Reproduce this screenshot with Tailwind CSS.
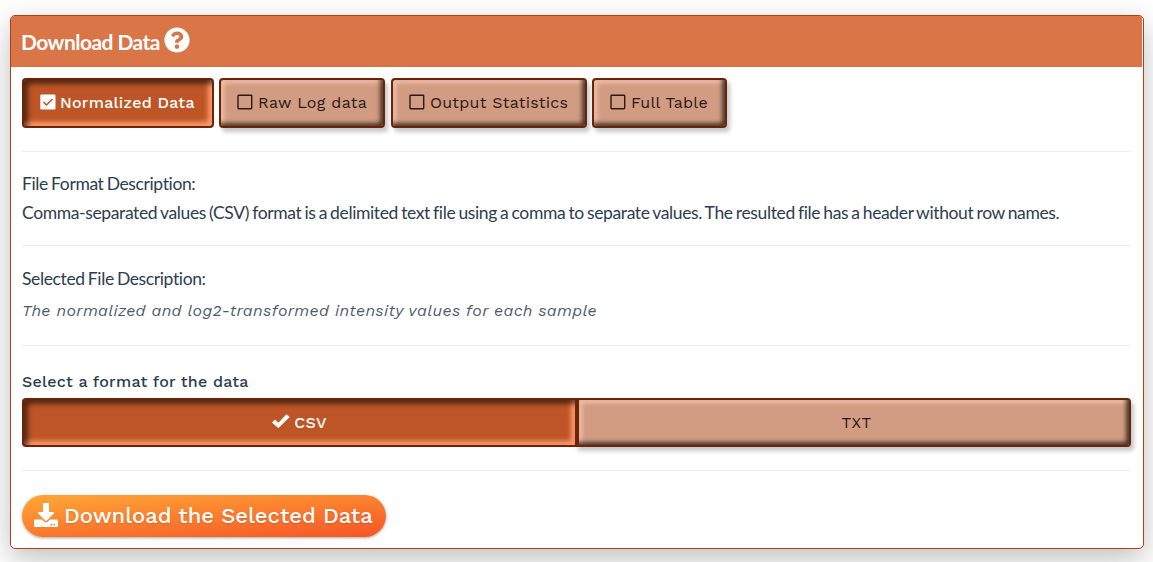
<!DOCTYPE html>
<html lang="en">
<head>
<meta charset="utf-8">
<title>Download Data</title>
<script src="https://cdn.jsdelivr.net/npm/@tailwindcss/browser@4"></script>
</head>
<body class="bg-white h-[562px] overflow-hidden pl-[10px] pt-[15px] font-['Work_Sans','Inter',sans-serif] text-[#2c3e50]">
<main class="w-[1134px] h-[534px] rounded-[5px] border border-[#b0410e] bg-white shadow-[0_10px_30px_rgba(0,0,0,0.25)]">
  <header class="h-[51px] w-[1131px] rounded-tl-[4px] bg-[#d97547] pl-[10px] flex items-center text-white">
    <h1 class="font-['Lato',sans-serif] font-bold text-[21px] leading-[26px] tracking-[-0.55px] w-[142px] whitespace-nowrap">Download Data</h1>
    <svg class="size-[26px] mb-[3px] ml-[1px]" viewBox="0 0 512 512" fill="currentColor"><path d="M504 256c0 137-111 248-248 248S8 393 8 256 119 8 256 8s248 111 248 248zM262.700 90c-54.500 0-89.300 23-116.500 63.800-3.500 5.300-2.400 12.400 2.700 16.300l34.700 26.300c5.200 3.900 12.600 3 16.700-2.100 17.900-22.700 30.100-35.800 57.300-35.800 20.400 0 45.700 13.100 45.700 33 0 15-12.400 22.700-32.500 34C247.100 238.500 216 254.900 216 296v4c0 6.600 5.400 12 12 12h56c6.600 0 12-5.400 12-12v-1.300c0-28.500 83.200-29.600 83.200-106.700 0-58-60.200-102-116.500-102zM256 338c-25.400 0-46 20.600-46 46s20.600 46 46 46 46-20.600 46-46-20.600-46-46-46z"/></svg>
  </header>
  <section class="px-[11px] pt-[11px] w-[1132px]">
    <div class="flex h-[50px] text-[16px] text-[#2a1a14]">
      <button class="w-[192px] mr-[5px] rounded-[4px] border-2 border-[#6b2408] bg-[#bd5526] text-white flex items-center pl-[16px] whitespace-nowrap shadow-[inset_4px_4px_5px_rgba(0,0,0,0.55),inset_-4px_-4px_5px_#ff9a6e]">
        <svg class="size-[16px] mr-[4px] mb-[2px] shrink-0" viewBox="0 0 16 16"><rect x=".3" y=".5" width="15.200" height="15" rx="1.300" fill="#fff"/><path d="M3.500 8l3 3 6-6" fill="none" stroke="#bd5526" stroke-width="1.500"/></svg>
        <span class="font-medium tracking-[0.28px]">Normalized Data</span>
      </button>
      <button class="w-[166px] mr-[6px] rounded-[4px] border-2 border-[#6b2408] bg-[#d29c82] flex items-center pl-[16px] whitespace-nowrap shadow-[3px_4px_4px_rgba(0,0,0,0.22),inset_-3px_-3px_4px_rgba(0,0,0,0.65),inset_3px_3px_4px_#f0bfaa]">
        <svg class="size-[16px] mr-[5px] mb-[2px] shrink-0" viewBox="0 0 16 16"><rect x="1" y="1.200" width="13.700" height="13.500" rx=".6" fill="none" stroke="currentColor" stroke-width="1.400"/></svg>
        <span class="tracking-[0.3px]">Raw Log data</span>
      </button>
      <button class="w-[196px] mr-[5px] rounded-[4px] border-2 border-[#6b2408] bg-[#d29c82] flex items-center pl-[16px] whitespace-nowrap shadow-[3px_4px_4px_rgba(0,0,0,0.22),inset_-3px_-3px_4px_rgba(0,0,0,0.65),inset_3px_3px_4px_#f0bfaa]">
        <svg class="size-[16px] mr-[5px] mb-[2px] shrink-0" viewBox="0 0 16 16"><rect x="1" y="1.200" width="13.700" height="13.500" rx=".6" fill="none" stroke="currentColor" stroke-width="1.400"/></svg>
        <span class="tracking-[0.24px]">Output Statistics</span>
      </button>
      <button class="w-[135px] rounded-[4px] border-2 border-[#6b2408] bg-[#d29c82] flex items-center pl-[16px] whitespace-nowrap shadow-[3px_4px_4px_rgba(0,0,0,0.22),inset_-3px_-3px_4px_rgba(0,0,0,0.65),inset_3px_3px_4px_#f0bfaa]">
        <svg class="size-[16px] mr-[5px] mb-[2px] shrink-0" viewBox="0 0 16 16"><rect x="1" y="1.200" width="13.700" height="13.500" rx=".6" fill="none" stroke="currentColor" stroke-width="1.400"/></svg>
        <span class="tracking-[0.24px]">Full Table</span>
      </button>
    </div>
    <hr class="mt-[23px] border-[#eeeeee] w-[1109px]">
    <div class="h-[93px] pt-[17px] font-['Lato',sans-serif] text-[17.500px] leading-[29px] tracking-[-0.37px] [word-spacing:-1px] whitespace-nowrap">
      <p><span>File Format Description:</span></p>
      <p><span>Comma-separated values (CSV) format is a delimited text file using a comma to separate values. The resulted file has a header without row names.</span></p>
    </div>
    <hr class="border-[#eeeeee] w-[1109px]">
    <div class="h-[99px] pt-[18px] whitespace-nowrap">
      <p class="font-['Lato',sans-serif] text-[17.500px] leading-[30px] tracking-[-0.37px] [word-spacing:-1px]"><span>Selected File Description:</span></p>
      <p class="text-[16px] leading-[34px] italic tracking-[0.35px] text-[#4c5b6b]"><span>The normalized and log2-transformed intensity values for each sample</span></p>
    </div>
    <hr class="border-[#eeeeee] w-[1109px]">
    <p class="mt-[24px] text-[16px] leading-[24px] font-medium tracking-[0.25px] h-[28px]"><span>Select a format for the data</span></p>
    <div class="flex h-[49px] w-[1109px] text-[16px] tracking-[0.3px]">
      <button class="w-[553px] rounded-l-[4px] border-2 border-r-0 border-[#6b2408] bg-[#bd5526] text-white flex items-center justify-center gap-[4px] shadow-[inset_4px_4px_5px_rgba(0,0,0,0.55),inset_-4px_-4px_5px_#ff9a6e]">
        <svg class="w-[18px] h-[15px] mb-[2px]" viewBox="0 0 18 15"><path d="M0 8.500L3 5.600 6.400 8.700 14.500 0.300 17.700 3 6.300 14.200z" fill="#fff"/></svg>
        <span class="font-medium">CSV</span>
      </button>
      <button class="w-[556px] rounded-r-[4px] border-2 border-l-4 border-[#6b2408] bg-[#d29c82] pl-[5px] text-[#2a1a14] shadow-[3px_4px_4px_rgba(0,0,0,0.22),inset_-3px_-3px_4px_rgba(0,0,0,0.65),inset_3px_3px_4px_#f0bfaa]"><span>TXT</span></button>
    </div>
    <hr class="mt-[23px] border-[#eeeeee] w-[1109px]">
    <button class="mt-[24px] flex items-center w-[364px] h-[42px] rounded-full pl-[12px] pb-[2px] text-white text-[22px] font-medium whitespace-nowrap bg-[linear-gradient(175deg,#ffa837_0%,#f65826_95%)] shadow-[0_1px_3px_rgba(0,0,0,0.35)] text-shadow-[0_1px_2px_rgba(0,0,0,0.15)]">
      <svg class="size-[24px] mr-[6px] shrink-0" viewBox="0 0 512 512" fill="currentColor"><path d="M216 0h80c13.300 0 24 10.700 24 24v168h87.700c17.800 0 26.700 21.500 14.100 34.100L269.700 378.300c-7.500 7.500-19.800 7.500-27.300 0L90.100 226.100c-12.600-12.600-3.700-34.100 14.100-34.100H192V24c0-13.300 10.700-24 24-24zm296 376v112c0 13.300-10.700 24-24 24H24c-13.300 0-24-10.700-24-24V376c0-13.300 10.700-24 24-24h146.700l49 49c20.100 20.100 52.500 20.100 72.600 0l49-49H488c13.300 0 24 10.700 24 24zm-124 88c0-11-9-20-20-20s-20 9-20 20 9 20 20 20 20-9 20-20zm64 0c0-11-9-20-20-20s-20 9-20 20 9 20 20 20 20-9 20-20z"/></svg>
      <span>Download the Selected Data</span>
    </button>
  </section>
</main>
</body>
</html>
